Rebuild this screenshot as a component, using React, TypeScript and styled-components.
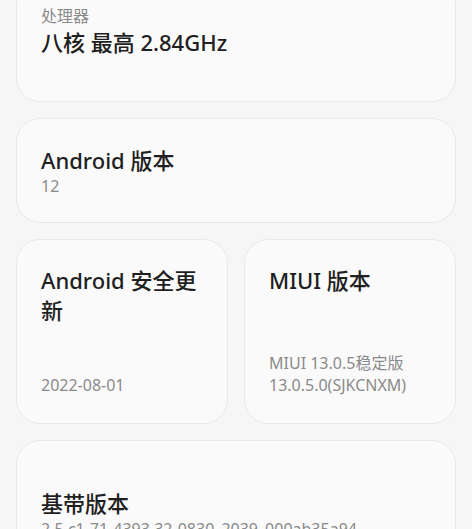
import React from "react";
import styled, { createGlobalStyle } from "styled-components";

const Global = createGlobalStyle`
  html, body { margin: 0; padding: 0; background: #f6f6f6; }
  body { font-family: "Noto Sans", "Noto Sans CJK SC", sans-serif; overflow: hidden; }
`;

const Page = styled.div`
  width: 472px;
  height: 529px;
  overflow: hidden;
  box-sizing: border-box;
  padding: 0 16px;
  display: flex;
  flex-direction: column;
  gap: 16px;
  background: #f6f6f6;
`;

const Card = styled.div<{ $pt?: number; $pb?: number; $mt?: number; $h?: number }>`
  box-sizing: border-box;
  background: #fafafa;
  border: 1px solid #e9e9e9;
  border-radius: 24px;
  padding: ${(p) => p.$pt ?? 26}px 24px ${(p) => p.$pb ?? 26}px;
  margin-top: ${(p) => p.$mt ?? 0}px;
  ${(p) => (p.$h ? `height: ${p.$h}px;` : "")}
  display: flex;
  flex-direction: column;
  justify-content: space-between;
  flex-shrink: 0;
`;

const Row = styled.div`
  display: grid;
  grid-template-columns: 1fr 1fr;
  gap: 16px;
  flex-shrink: 0;
`;

const Title = styled.div`
  font-size: 22px;
  line-height: 30px;
  font-weight: 500;
  color: #1f1f1f;
`;

const Sub = styled.div`
  font-size: 16px;
  line-height: 22px;
  color: #8a8a8a;
  white-space: pre-line;
`;

export default function App() {
  return (
    <>
      <Global />
      <Page>
        <Card $mt={-21} $pt={25} $pb={44}>
          <div>
            <Sub>处理器</Sub>
            <Title>八核 最高 2.84GHz</Title>
          </div>
        </Card>
        <Card $pt={26} $pb={25}>
          <div>
            <Title>Android 版本</Title>
            <Sub>12</Sub>
          </div>
        </Card>
        <Row>
          <Card $h={185} $pt={25} $pb={27}>
            <Title>Android 安全更新</Title>
            <Sub>2022-08-01</Sub>
          </Card>
          <Card $h={185} $pt={25} $pb={27}>
            <Title>MIUI 版本</Title>
            <Sub>{"MIUI 13.0.5稳定版\n13.0.5.0(SJKCNXM)"}</Sub>
          </Card>
        </Row>
        <Card $pt={47} $pb={26}>
          <div>
            <Title>基带版本</Title>
            <Sub>2.5.c1-71-4393.32-0830_2039_000ab35a94</Sub>
          </div>
        </Card>
      </Page>
    </>
  );
}
